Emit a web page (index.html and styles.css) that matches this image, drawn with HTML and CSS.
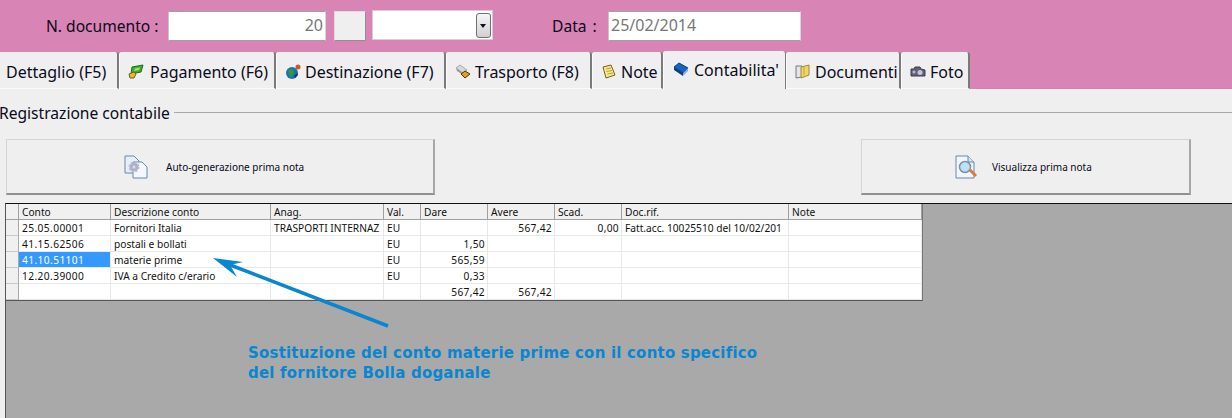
FILE: index.html
```html
<!DOCTYPE html>
<html>
<head>
  <title>Contabilita'</title>
  <link rel="stylesheet" href="styles.css">
</head>
<body>
  <div class="top-bar">
    <label class="doc-label">N. documento :</label>
    <div class="field doc-number">20</div>
    <button class="small-btn"></button>
    <div class="combo"><span class="combo-arrow"></span></div>
    <label class="date-label">Data :</label>
    <div class="field doc-date">25/02/2014</div>
  </div>

  <div class="tabs">
    <div class="tab tab-dettaglio">Dettaglio (F5)</div>
    <div class="tab tab-pagamento">
      <svg class="tab-icon" viewBox="0 0 16 16"><path d="M4 3 L15 1 L13 8 L3 10 Z" fill="#3fae2f" stroke="#1d6b18"/><path d="M7 4.500 L12 3.500 L11 6 L6 7 Z" fill="#a5e070"/><path d="M1 10 L6 8 L8 10 L6 14 L2 14 Z" fill="#e8b830" stroke="#7d5c10"/></svg>
      Pagamento (F6)
    </div>
    <div class="tab tab-destinazione">
      <svg class="tab-icon" viewBox="0 0 16 16"><circle cx="7" cy="9" r="6" fill="#1f6fb5"/><path d="M3 6 L8 5 L9 9 L6 14 L4 10 Z" fill="#2f9a3a"/><path d="M9 12 L12 9 L13 11 L10 14 Z" fill="#0d3c70"/><circle cx="13" cy="3" r="2.500" fill="#d8502c"/></svg>
      Destinazione (F7)
    </div>
    <div class="tab tab-trasporto">
      <svg class="tab-icon" viewBox="0 0 16 16"><path d="M1 4 L5 1 L12 6 L8 9 Z" fill="#d8d8d8" stroke="#aaa"/><path d="M1 4 L8 9 L8 11 L2 7 Z" fill="#999"/><path d="M6 10 L10 7 L15 10 L10 14 Z" fill="#e0a020" stroke="#4a3608"/></svg>
      Trasporto (F8)
    </div>
    <div class="tab tab-note">
      <svg class="tab-icon" viewBox="0 0 16 16"><path d="M2 3 L10 1 L14 11 L5 14 Z" fill="#f7e88a" stroke="#6e6024"/><path d="M5 5 L10 4 M5.500 7.500 L11 6.500 M6.500 10 L12 9" stroke="#b5a040"/></svg>
      Note
    </div>
    <div class="tab tab-contabilita active">
      <svg class="tab-icon" viewBox="0 0 16 16"><path d="M1 5 L6 1 L15 6 L10 11 Z" fill="#1565c0" stroke="#0b3d80"/><path d="M1 5 L1 8 L10 14 L10 11 Z" fill="#0b3d80"/><path d="M10 11 L15 6 L15 9 L10 14 Z" fill="#7fb0e0"/></svg>
      Contabilita'
    </div>
    <div class="tab tab-documenti">
      <svg class="tab-icon" viewBox="0 0 16 16"><path d="M1 2 L7 2 L7 13 L1 14 Z" fill="#e4e4ec" stroke="#77778f"/><path d="M6 3 L14 1 L14 11 L6 14 Z" fill="#efd469" stroke="#a08a30"/><path d="M9 3 L9 11" stroke="#c8a838"/></svg>
      Documenti
    </div>
    <div class="tab tab-foto">
      <svg class="tab-icon" viewBox="0 0 16 16"><path d="M1 5 L4 5 L5 3 L10 3 L11 5 L15 6 L15 12 L1 12 Z" fill="#60607a" stroke="#3c3c50"/><circle cx="10" cy="8.500" r="2.500" fill="#c4c4d4"/><circle cx="4" cy="8" r="1.500" fill="#b8b8c8"/></svg>
      Foto
    </div>
  </div>

  <div class="content">
    <div class="group-title"><span>Registrazione contabile</span></div>

    <div class="actions">
      <button class="action-btn btn-auto">
        <svg class="action-icon" viewBox="0 0 24 24"><path d="M1 1 L10 1 L15 6 L15 18 L1 18 Z" fill="#e6eef8" stroke="#6a86ac"/><path d="M9 7 L18 7 L23 12 L23 23 L9 23 Z" fill="#f4f8fd" stroke="#6a86ac"/><circle cx="10" cy="12" r="4.500" fill="#aeb0c8" stroke="#b8b8d0" stroke-width="2" stroke-dasharray="2 1.500"/><circle cx="10" cy="12" r="1.500" fill="#dcdce8"/></svg>
        <span>Auto-generazione prima nota</span>
      </button>
      <button class="action-btn btn-view">
        <svg class="action-icon" viewBox="0 0 24 24"><path d="M1 1 L13 1 L19 7 L19 23 L1 23 Z" fill="#f2f6fb" stroke="#6a86ac"/><path d="M13 1 L13 7 L19 7" fill="#d4e2f2" stroke="#6a86ac"/><path d="M15 15 L21 21" stroke="#e07a30" stroke-width="3"/><circle cx="10" cy="12" r="5.500" fill="#bfe0f4" stroke="#7a92a8" stroke-width="1.500"/></svg>
        <span>Visualizza prima nota</span>
      </button>
    </div>

    <div class="grid-area">
      <table class="grid">
        <colgroup>
          <col class="c-ind"><col class="c-conto"><col class="c-descr"><col class="c-anag"><col class="c-val">
          <col class="c-num"><col class="c-num"><col class="c-num"><col class="c-doc"><col class="c-note">
        </colgroup>
        <thead>
          <tr><th></th><th>Conto</th><th>Descrizione conto</th><th>Anag.</th><th>Val.</th><th>Dare</th><th>Avere</th><th>Scad.</th><th>Doc.rif.</th><th>Note</th></tr>
        </thead>
        <tbody>
          <tr><th></th><td class="code">25.05.00001</td><td>Fornitori Italia</td><td>TRASPORTI INTERNAZ</td><td>EU</td><td class="num"></td><td class="num">567,42</td><td class="num">0,00</td><td>Fatt.acc. 10025510 del 10/02/201</td><td></td></tr>
          <tr><th></th><td class="code">41.15.62506</td><td>postali e bollati</td><td></td><td>EU</td><td class="num">1,50</td><td></td><td></td><td></td><td></td></tr>
          <tr><th></th><td class="code selected">41.10.51101</td><td>materie prime</td><td></td><td>EU</td><td class="num">565,59</td><td></td><td></td><td></td><td></td></tr>
          <tr><th></th><td class="code">12.20.39000</td><td>IVA a Credito c/erario</td><td></td><td>EU</td><td class="num">0,33</td><td></td><td></td><td></td><td></td></tr>
          <tr><th></th><td></td><td></td><td></td><td></td><td class="num">567,42</td><td class="num">567,42</td><td></td><td></td><td></td></tr>
        </tbody>
      </table>
    </div>
  </div>

  <svg class="callout-arrow" width="200" height="90" viewBox="0 0 200 90">
    <path d="M188 83 L25 20" stroke="#0a86d0" stroke-width="3.500" fill="none"/>
    <path d="M13 15 L43 19 L30 22 L37 34 Z" fill="#0a86d0"/>
  </svg>
  <div class="callout-text">Sostituzione del conto materie prime con il conto specifico<br>del fornitore Bolla doganale</div>
</body>
</html>
```

FILE: styles.css
```css
* {
  box-sizing: border-box;
}

html, body {
  height: 100%;
}

body {
  margin: 0;
  position: relative;
  overflow: hidden;
  background-color: #efefef;
  font-family: "Noto Sans", Arial, sans-serif;
  font-size: 15px;
  color: #0a0a20;
  display: flex;
  flex-direction: column;
}

.top-bar {
  height: 52px;
  flex: none;
  display: flex;
  align-items: center;
  background-color: #d884b4;
  padding-left: 46px;
  padding-bottom: 1px;
  font-size: 15.600px;
}

.doc-label {
  width: 122px;
}

.field {
  height: 30px;
  background: white;
  border-top: 1px solid #a0a0a0;
  border-left: 1px solid #c8c8c8;
  border-bottom: 1px solid #a0a0a0;
  border-right: 1px solid #d8d8d8;
  color: #777;
  font-size: 16px;
  line-height: 27px;
  padding: 0 2px;
}

.doc-number {
  width: 158px;
  text-align: right;
}

.small-btn {
  width: 32px;
  height: 30px;
  margin-left: 8px;
  background: #efefef;
  border: 1px solid #dcdcdc;
  border-bottom: 1px solid #909090;
  border-right: 1px solid #909090;
  padding: 0;
}

.combo {
  width: 121px;
  height: 30px;
  margin-left: 6px;
  margin-top: -1px;
  background: white;
  border: 1px solid #dcc8d8;
  display: flex;
  justify-content: flex-end;
  align-items: center;
  padding-right: 1px;
}

.combo-arrow {
  width: 15px;
  height: 25px;
  border: 1px solid #707070;
  border-radius: 3px;
  background: linear-gradient(#f6f6f6, #d0d0d0);
  position: relative;
}

.combo-arrow::after {
  content: "";
  position: absolute;
  left: 3px;
  top: 10px;
  border: 3px solid transparent;
  border-top: 4px solid #111;
}

.date-label {
  margin-left: 59px;
  width: 56px;
  word-spacing: 2px;
}

.doc-date {
  width: 193px;
}

.tabs {
  height: 37px;
  flex: none;
  display: flex;
  align-items: flex-end;
  background-color: #d884b4;
  font-size: 16px;
}

.tab {
  height: 37px;
  display: flex;
  align-items: center;
  background-color: #efefef;
  border-right: 2px solid #7a7a7a;
  border-left: 1px solid #fbfbfb;
  border-bottom: 1px solid #fbfbfb;
  border-radius: 3px 3px 0 0;
  white-space: nowrap;
  padding-left: 8px;
  padding-top: 3px;
  gap: 4px;
}

.tab.active {
  height: 38px;
  border-right-width: 1px;
  border-bottom: none;
  padding-top: 0;
  padding-bottom: 1px;
  padding-left: 9px;
  gap: 5px;
}

.tab-icon {
  width: 16px;
  height: 16px;
  flex: none;
}

.tab-dettaglio { width: 119px; padding-left: 6px; border-left: none; border-radius: 0 3px 0 0; }
.tab-pagamento { width: 157px; gap: 6px; }
.tab-destinazione { width: 170px; }
.tab-trasporto { width: 146px; }
.tab-note { width: 71px; }
.tab-contabilita { width: 123px; }
.tab-documenti { width: 115px; }
.tab-foto { width: 69px; }

.content {
  flex: 1;
  display: flex;
  flex-direction: column;
  min-height: 0;
}

.group-title {
  display: flex;
  align-items: center;
  height: 20px;
  margin-top: 14px;
  margin-left: -1px;
  font-size: 15.600px;
}

.group-title::after {
  content: "";
  flex: 1;
  height: 1px;
  margin-left: 4px;
  margin-top: -2px;
  background: #a8a8a8;
}

.actions {
  display: flex;
  justify-content: space-between;
  padding: 16px 41px 0 6px;
}

.action-btn {
  height: 56px;
  background: #efefef;
  border: 1px solid #d4d4d4;
  border-bottom: 2px solid #909090;
  border-right: 2px solid #a8a8a8;
  display: flex;
  align-items: center;
  font-family: "Noto Sans", Arial, sans-serif;
  font-size: 10px;
  color: #0a0a20;
  padding: 0;
}

.btn-auto {
  width: 429px;
  padding-left: 117px;
  gap: 18px;
}

.btn-view {
  width: 330px;
  padding-left: 93px;
  gap: 13px;
}

.action-icon {
  width: 24px;
  height: 24px;
  flex: none;
}

.grid-area {
  flex: 1;
  margin: 8px 0 0 5px;
  background-color: #a9a9a9;
  border-top: 1px solid #111;
  border-left: 1px solid #555;
}

.grid {
  table-layout: fixed;
  border-collapse: separate;
  border-spacing: 0;
  width: 916px;
  background: white;
  font-size: 10.200px;
  color: #111;
  border-right: 1px solid #777;
  border-bottom: 1px solid #555;
}

.c-ind { width: 13px; }
.c-conto { width: 92px; }
.c-descr { width: 160px; }
.c-anag { width: 113px; }
.c-val { width: 37px; }
.c-num { width: 67px; }
.c-doc { width: 167px; }
.c-note { width: 133px; }

.grid th,
.grid td {
  height: 16px;
  padding: 1px 2px 0 3px;
  overflow: hidden;
  white-space: nowrap;
  font-weight: normal;
  text-align: left;
  line-height: 14px;
  border-right: 1px solid #e8e8e8;
  border-bottom: 1px solid #e8e8e8;
}

.grid thead th {
  background: #f0f0f0;
  border-right: 1px solid #a0a0a0;
  border-bottom: 1px solid #a0a0a0;
}

.grid tbody th {
  background: #f0f0f0;
  border-right: 1px solid #a8a8a8;
  border-bottom: 1px solid #c8c8c8;
}

.grid td.num {
  text-align: right;
  letter-spacing: 0.300px;
}

.grid td.code {
  letter-spacing: 0.400px;
}

.grid td.selected {
  background: #3399ff;
  color: white;
}

.callout-arrow {
  position: absolute;
  left: 200px;
  top: 243px;
}

.callout-text {
  position: absolute;
  left: 248px;
  top: 343px;
  font-family: "DejaVu Sans", Arial, sans-serif;
  font-weight: bold;
  font-size: 15px;
  letter-spacing: 0.200px;
  line-height: 20px;
  color: #0a86d0;
  white-space: nowrap;
}
```
